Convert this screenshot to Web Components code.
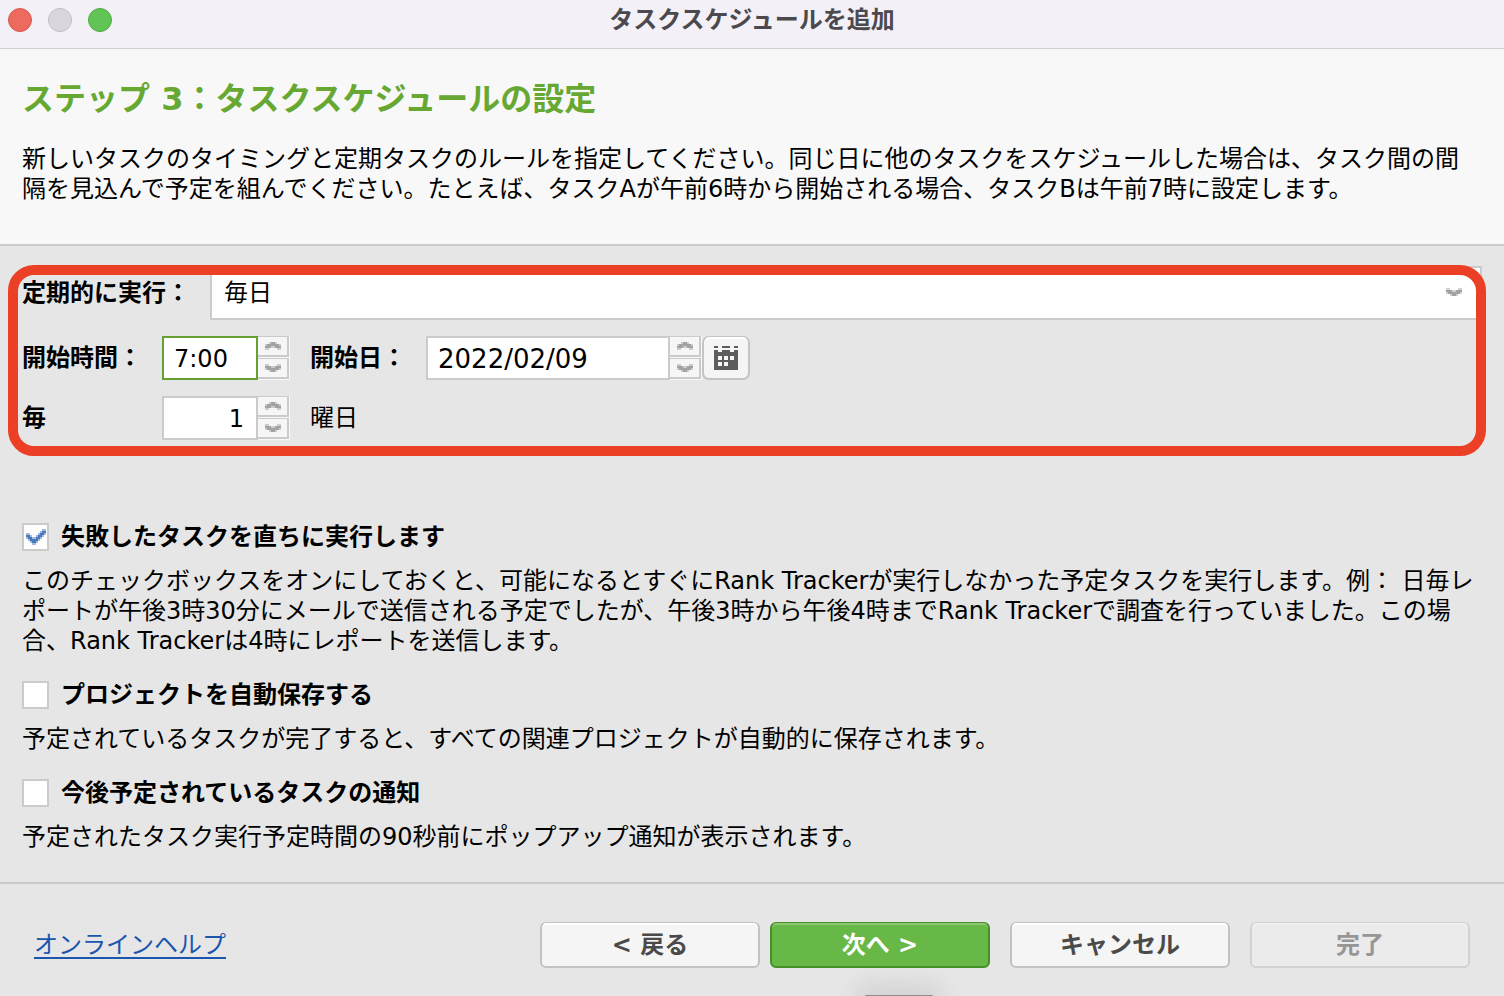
<!DOCTYPE html>
<html lang="ja">
<head>
<meta charset="utf-8">
<title>タスクスケジュールを追加</title>
<style>
  body {
    margin: 0;
    font: 24px/30px "DejaVu Sans", "Noto Sans CJK JP", sans-serif;
    color: #000;
    background: #e6e6e6;
  }
</style>
</head>
<body>
<wizard-window heading="タスクスケジュールを追加">
  <step-header slot="header">
    <span slot="title">ステップ 3：タスクスケジュールの設定</span>
    新しいタスクのタイミングと定期タスクのルールを指定してください。同じ日に他のタスクをスケジュールした場合は、タスク間の間隔を見込んで予定を組んでください。たとえば、タスクAが午前6時から開始される場合、タスクBは午前7時に設定します。
  </step-header>
  <schedule-form></schedule-form>
  <option-list>
    <check-option label="失敗したタスクを直ちに実行します" checked>このチェックボックスをオンにしておくと、可能になるとすぐにRank Trackerが実行しなかった予定タスクを実行します。例： 日毎レポートが午後3時30分にメールで送信される予定でしたが、午後3時から午後4時までRank Trackerで調査を行っていました。この場合、Rank Trackerは4時にレポートを送信します。</check-option>
    <check-option label="プロジェクトを自動保存する">予定されているタスクが完了すると、すべての関連プロジェクトが自動的に保存されます。</check-option>
    <check-option label="今後予定されているタスクの通知">予定されたタスク実行予定時間の90秒前にポップアップ通知が表示されます。</check-option>
  </option-list>
  <wizard-footer slot="footer">
    <a slot="help" href="#help">オンラインヘルプ</a>
    <push-button>&lt; 戻る</push-button>
    <push-button kind="primary">次へ &gt;</push-button>
    <push-button class="apart">キャンセル</push-button>
    <push-button class="apart" disabled>完了</push-button>
  </wizard-footer>
</wizard-window>

<script>
const define = (name, html, setup) => {
  const template = document.createElement('template');
  template.innerHTML = html;
  customElements.define(name, class extends HTMLElement {
    constructor() {
      super();
      this.attachShadow({ mode: 'open' }).append(template.content.cloneNode(true));
    }
    connectedCallback() {
      if (setup) setup(this, this.shadowRoot);
    }
  });
};

/* Turns rows of characters into an SVG of 2px cells: # is solid, o is soft. */
const pixels = (rows, color) => {
  const w = rows[0].length, h = rows.length;
  let cells = '';
  rows.forEach((row, y) => [...row].forEach((c, x) => {
    if (c !== '.') cells += `<rect x="${x}" y="${y}" width="1" height="1"${c === 'o' ? ' opacity=".5"' : ''}/>`;
  }));
  return `<svg width="${w * 2}" height="${h * 2}" viewBox="0 0 ${w} ${h}" fill="${color}" shape-rendering="crispEdges" aria-hidden="true">${cells}</svg>`;
};
const up = pixels(['..o##o..', 'o######o', '###oo###', 'oo....oo'], '#a2a2a2');
const down = pixels(['oo....oo', '###oo###', 'o######o', '..o##o..'], '#a2a2a2');
const tick = pixels(['........oo', '.......o##', 'oo....o##o', '##o..o##o.', 'o##oo##o..', '.o####o...', '..o##o....', '...oo.....'], '#4a78bd');

define('wizard-window', `
  <style>
    :host { display: flex; flex-direction: column; min-height: 100vh; position: relative; overflow: hidden; }
    .bar { display: grid; grid-template-columns: 1fr auto 1fr; height: 48px; padding: 0 8px 8px; box-sizing: border-box; align-items: center; background: #f3f1f7; }
    h1 { margin: 0; font-size: 24px; line-height: 30px; font-weight: 700; color: #4b494e; }
    .lights { display: flex; gap: 16px; }
    .lights i { width: 24px; height: 24px; border-radius: 50%; box-sizing: border-box; border: 1px solid #d6574c; background: #ed6a5f; }
    .lights .min { background: #d9d7dd; border-color: #bfbdc2; }
    .lights .max { background: #61c555; border-color: #4fa944; }
    main { flex: 1; padding: 20px 22px 28px; }
    .dock { position: absolute; left: 57.5%; bottom: -1px; width: 68px; height: 2px; border-radius: 8px; background: #8c8c8c; box-shadow: 0 0 24px 8px rgba(0, 0, 0, .12); }
  </style>
  <header class="bar">
    <div class="lights"><i></i><i class="min"></i><i class="max"></i></div>
    <h1></h1>
  </header>
  <slot name="header"></slot>
  <main><slot></slot></main>
  <slot name="footer"></slot>
  <div class="dock"></div>
`, (el, root) => { root.querySelector('h1').textContent = el.getAttribute('heading'); });

define('step-header', `
  <style>
    :host { display: block; padding: 30px 22px 40px; background: #f8f8f8; border-top: 1px solid #cfcfcf; border-bottom: 2px solid #cbcbcb; }
    h2 { margin: 0 0 25px; font-size: 32px; line-height: 40px; color: #66a832; }
    p { margin: 0; }
  </style>
  <h2><slot name="title"></slot></h2>
  <p><slot></slot></p>
`);

define('spin-field', `
  <style>
    :host { display: flex; height: 44px; }
    input { font: inherit; width: 96px; box-sizing: border-box; margin: 0; padding: 2px 12px 0 10px; border: 2px solid #cbcbcb; border-radius: 0; background: #fff; color: #000; outline: none; }
    :host([active]) input { border-color: #66a033; }
    :host([wide]) input { width: 244px; font-size: 26px; }
    :host([numeric]) input { text-align: right; }
    .steps { display: grid; gap: 1px; width: 32px; box-sizing: border-box; border-right: 1px solid #f8f8f8; border-bottom: 1px solid #f8f8f8; background: #f8f8f8; }
    button { display: grid; place-items: center; margin: 0; padding: 0; border: solid #cbcbcb; border-width: 1px 2px 2px 0; background: #f6f6f6; }
  </style>
  <input type="text">
  <div class="steps">
    <button type="button" aria-label="増やす">${up}</button>
    <button type="button" aria-label="減らす">${down}</button>
  </div>
`, (el, root) => {
  const input = root.querySelector('input');
  input.value = el.getAttribute('value');
  input.setAttribute('aria-label', el.getAttribute('label'));
});

define('schedule-form', `
  <style>
    :host { display: block; position: relative; }
    form { display: grid; gap: 16px; }
    .row { display: flex; align-items: center; }
    .name { width: 140px; font-weight: 700; }
    .first .name { width: 188px; }
    .pick { flex: 1; position: relative; }
    select { appearance: none; display: block; width: 100%; height: 54px; box-sizing: border-box; margin: 0; padding: 0 12px; border: 2px solid #cbcbcb; border-radius: 0; background: #fff; color: #000; font: inherit; }
    .pick svg { position: absolute; right: 20px; top: 22px; pointer-events: none; }
    .after { margin: 0 20px; }
    .date { width: 96px; margin: 0 20px; font-weight: 700; white-space: nowrap; }
    .calendar { width: 48px; height: 44px; margin: 0; padding: 0; display: grid; place-items: center; border: 2px solid #c4c4c4; border-top-width: 1px; border-radius: 7px; background: #f5f5f5; box-shadow: inset 0 2px #fff; }
    .mark { position: absolute; top: -1px; bottom: -16px; left: -14px; right: -4px; box-sizing: border-box; border: 10px solid #eb4026; border-radius: 26px; pointer-events: none; }
  </style>
  <form>
    <div class="row first">
      <label class="name" for="repeat">定期的に実行：</label>
      <div class="pick"><select id="repeat"><option>毎日</option></select>${down}</div>
    </div>
    <div class="row">
      <span class="name">開始時間：</span>
      <spin-field label="開始時間" value="7:00" active></spin-field>
      <span class="date">開始日：</span>
      <spin-field label="開始日" value="2022/02/09" wide></spin-field>
      <button class="calendar" type="button" aria-label="カレンダー">
        <svg width="24" height="24" viewBox="0 0 12 12" fill="#5c5c5c" fill-rule="evenodd" shape-rendering="crispEdges" aria-hidden="true">
          <path d="M0 0h2v1H0zM4 0h4v1H4zM10 0h2v1h-2zM0 2h2v1h2V2h4v1h2V2h2v10H0zM2 5v2h2V5zM5 5v2h2V5zM8 5v2h2V5zM2 8v2h2V8zM5 8v2h2V8z"/>
        </svg>
      </button>
    </div>
    <div class="row">
      <span class="name">毎</span>
      <spin-field label="毎" value="1" numeric></spin-field>
      <span class="after">曜日</span>
    </div>
  </form>
  <div class="mark"></div>
`);

define('option-list', `
  <style>:host { display: flex; flex-direction: column; gap: 25px; margin-top: 83px; }</style>
  <slot></slot>
`);

define('check-option', `
  <style>
    :host { display: block; }
    label { display: flex; align-items: center; gap: 12px; height: 28px; font-weight: 700; }
    .box { display: grid; place-items: center; }
    .box > * { grid-area: 1 / 1; }
    input { appearance: none; width: 27px; height: 28px; box-sizing: border-box; margin: 0; border: 2px solid #cbcbcb; background: #fff; }
    svg { visibility: hidden; pointer-events: none; }
    input:checked + svg { visibility: visible; }
    p { margin: 15px 0 0; }
  </style>
  <label><span class="box"><input type="checkbox">${tick}</span><span class="text"></span></label>
  <p><slot></slot></p>
`, (el, root) => {
  root.querySelector('.text').textContent = el.getAttribute('label');
  root.querySelector('input').checked = el.hasAttribute('checked');
});

define('push-button', `
  <style>
    :host { display: block; width: 220px; }
    button { display: block; width: 100%; height: 46px; margin: 0; padding: 0; box-sizing: border-box; font: inherit; font-weight: 700; color: #4a4a4a; background: #f5f5f5; border: 2px solid #c2c2c2; border-top-width: 1px; border-radius: 6px; box-shadow: inset 0 2px #fff; }
    :host([kind=primary]) button { color: #fff; background: #68b847; border-color: #459129; box-shadow: inset 0 2px #8ec66f; }
    button:disabled { color: #969696; background: #ebebeb; border-color: #d2d2d2; box-shadow: inset 0 2px #f0f0f0; }
  </style>
  <button type="button"><slot></slot></button>
`, (el, root) => { root.querySelector('button').disabled = el.hasAttribute('disabled'); });

define('wizard-footer', `
  <style>
    :host { display: flex; align-items: center; gap: 10px; padding: 38px 34px 28px; border-top: 2px solid #cbcbcb; }
    .help { flex: 1; }
    ::slotted(a) { color: #1a55ae; text-decoration: underline; text-decoration-thickness: 2px; text-underline-offset: 4px; }
    ::slotted(.apart) { margin-left: 10px; }
  </style>
  <div class="help"><slot name="help"></slot></div>
  <slot></slot>
`);
</script>
</body>
</html>
